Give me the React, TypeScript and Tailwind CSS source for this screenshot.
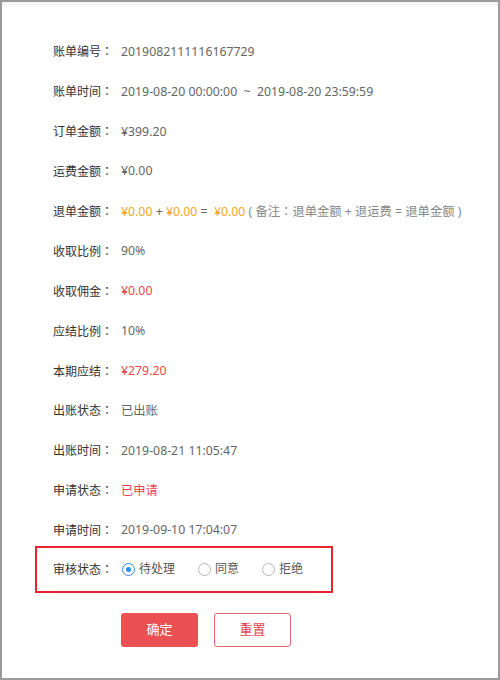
import React from "react";

const font = { fontFamily: '"Noto Sans", "Noto Sans CJK SC", sans-serif' };
const tc = { fontFamily: '"Noto Sans CJK TC", sans-serif' };

function Row({ label, children }: { label: string; children: React.ReactNode }) {
  return (
    <div className="flex items-center h-[39.9px] text-[12px]">
      <div className="w-[68px] shrink-0 text-[#333] whitespace-nowrap">
        {label}
        <span style={tc}>：</span>
      </div>
      <div className="text-[#666] whitespace-pre text-[12.3px]">{children}</div>
    </div>
  );
}

function Radio({ checked, label }: { checked?: boolean; label: string }) {
  return (
    <div className="flex items-center gap-[4px]">
      <span
        className={
          "w-[13px] h-[13px] rounded-full border flex items-center justify-center bg-white " +
          (checked ? "border-[#2d8cf0]" : "border-[#b5b5b5]")
        }
      >
        {checked && <span className="w-[5px] h-[5px] rounded-full bg-[#2d8cf0]" />}
      </span>
      <span className="text-[#555]">{label}</span>
    </div>
  );
}

export default function App() {
  return (
    <div style={font} className="w-[500px] h-[680px] border-2 border-[#9a9a9a] bg-white flex flex-col">
      <div className="h-[4px] bg-[#f5f5f5]" />
      <div className="pl-[51px] pt-[26px] flex flex-col">
        <Row label="账单编号">2019082111116167729</Row>
        <Row label="账单时间">{"2019-08-20 00:00:00  ~  2019-08-20 23:59:59"}</Row>
        <Row label="订单金额">¥399.20</Row>
        <Row label="运费金额">¥0.00</Row>
        <Row label="退单金额">
          <span className="text-[#f5a623]">¥0.00</span>
          {" + "}
          <span className="text-[#f5a623]">¥0.00</span>
          {" =  "}
          <span className="text-[#f5a623]">¥0.00</span>
          <span className="text-[#888]">
            {" ( 备注"}
            <span style={tc}>：</span>
            {"退单金额 + 退运费 = 退单金额 )"}
          </span>
        </Row>
        <Row label="收取比例">90%</Row>
        <Row label="收取佣金">
          <span className="text-[#e8474b]">¥0.00</span>
        </Row>
        <Row label="应结比例">10%</Row>
        <Row label="本期应结">
          <span className="text-[#e8474b]">¥279.20</span>
        </Row>
        <Row label="出账状态">已出账</Row>
        <Row label="出账时间">2019-08-21 11:05:47</Row>
        <Row label="申请状态">
          <span className="text-[#e8474b]">已申请</span>
        </Row>
        <Row label="申请时间">2019-09-10 17:04:07</Row>
      </div>
      <div className="ml-[33px] mt-[-5px] w-[298px] h-[47px] border-2 border-[#e5262e] flex items-center pl-[16px] text-[12px]">
        <div className="w-[69px] shrink-0 text-[#333] whitespace-nowrap">
          审核状态<span style={tc}>：</span>
        </div>
        <div className="flex items-center gap-[23px]">
          <Radio checked label="待处理" />
          <Radio label="同意" />
          <Radio label="拒绝" />
        </div>
      </div>
      <div className="flex gap-[16px] ml-[119px] mt-[20px]">
        <button className="w-[77px] h-[34px] rounded-[3px] bg-[#eb5053] text-white text-[13px]">确定</button>
        <button className="w-[77px] h-[34px] rounded-[3px] border border-[#e06a6e] bg-white text-[#e0474b] text-[13px]">
          重置
        </button>
      </div>
    </div>
  );
}
